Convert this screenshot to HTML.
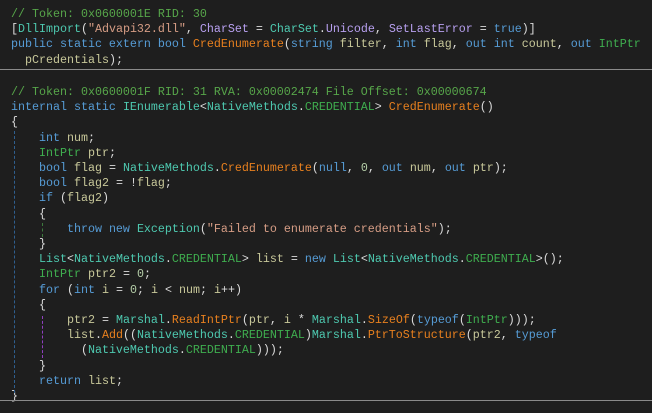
<!DOCTYPE html>
<html><head><meta charset="utf-8"><style>
html,body{margin:0;padding:0;background:#1e1e1e;width:652px;height:413px;overflow:hidden}
.c{position:absolute;left:11px;font-family:"Liberation Mono",monospace;font-size:11.67px;line-height:15.2px;color:#dcdcdc;white-space:pre}
.cm{color:#57a64a}.k{color:#569cd6}.t{color:#4ec9b0}.s{color:#3fae4f}.m{color:#e8801e}.v{color:#c8c89a}.p{color:#b8a0f0}.str{color:#d69d85}.n{color:#b5cea8}
.sep{position:absolute;left:0;width:652px;height:1px;background:#8a8a8a}
.g{position:absolute;width:0;border-left:1px dashed}
</style></head><body>
<div class="c" style="top:7px"><span class="cm">// Token: 0x0600001E RID: 30</span>
[<span class="t">DllImport</span>(<span class="str">"Advapi32.dll"</span>, <span class="p">CharSet</span> = <span class="t">CharSet</span>.<span class="p">Unicode</span>, <span class="p">SetLastError</span> = <span class="k">true</span>)]
<span class="k">public static extern bool</span> <span class="m">CredEnumerate</span>(<span class="k">string</span> <span class="v">filter</span>, <span class="k">int</span> <span class="v">flag</span>, <span class="k">out int</span> <span class="v">count</span>, <span class="k">out</span> <span class="s">IntPtr</span>
  <span class="v">pCredentials</span>);</div>
<div class="sep" style="top:69px"></div>
<div class="c" style="top:85px"><span class="cm">// Token: 0x0600001F RID: 31 RVA: 0x00002474 File Offset: 0x00000674</span>
<span class="k">internal static</span> <span class="t">IEnumerable</span>&lt;<span class="t">NativeMethods</span>.<span class="s">CREDENTIAL</span>&gt; <span class="m">CredEnumerate</span>()
{
    <span class="k">int</span> <span class="v">num</span>;
    <span class="s">IntPtr</span> <span class="v">ptr</span>;
    <span class="k">bool</span> <span class="v">flag</span> = <span class="t">NativeMethods</span>.<span class="m">CredEnumerate</span>(<span class="k">null</span>, <span class="n">0</span>, <span class="k">out</span> <span class="v">num</span>, <span class="k">out</span> <span class="v">ptr</span>);
    <span class="k">bool</span> <span class="v">flag2</span> = !<span class="v">flag</span>;
    <span class="k">if</span> (<span class="v">flag2</span>)
    {
        <span class="k">throw new</span> <span class="t">Exception</span>(<span class="str">"Failed to enumerate credentials"</span>);
    }
    <span class="t">List</span>&lt;<span class="t">NativeMethods</span>.<span class="s">CREDENTIAL</span>&gt; <span class="v">list</span> = <span class="k">new</span> <span class="t">List</span>&lt;<span class="t">NativeMethods</span>.<span class="s">CREDENTIAL</span>&gt;();
    <span class="s">IntPtr</span> <span class="v">ptr2</span> = <span class="n">0</span>;
    <span class="k">for</span> (<span class="k">int</span> <span class="v">i</span> = <span class="n">0</span>; <span class="v">i</span> &lt; <span class="v">num</span>; <span class="v">i</span>++)
    {
        <span class="v">ptr2</span> = <span class="t">Marshal</span>.<span class="m">ReadIntPtr</span>(<span class="v">ptr</span>, <span class="v">i</span> * <span class="t">Marshal</span>.<span class="m">SizeOf</span>(<span class="k">typeof</span>(<span class="s">IntPtr</span>)));
        <span class="v">list</span>.<span class="m">Add</span>((<span class="t">NativeMethods</span>.<span class="s">CREDENTIAL</span>)<span class="t">Marshal</span>.<span class="m">PtrToStructure</span>(<span class="v">ptr2</span>, <span class="k">typeof</span>
          (<span class="t">NativeMethods</span>.<span class="s">CREDENTIAL</span>)));
    }
    <span class="k">return</span> <span class="v">list</span>;
}</div>
<div class="g" style="left:14px;top:131px;height:262px;border-color:#2f5f8f"></div>
<div class="g" style="left:42px;top:223px;height:14px;border-color:#3d7a3d"></div>
<div class="g" style="left:42px;top:316px;height:42px;border-color:#9040c0"></div>
<div class="sep" style="top:400px"></div>
</body></html>
